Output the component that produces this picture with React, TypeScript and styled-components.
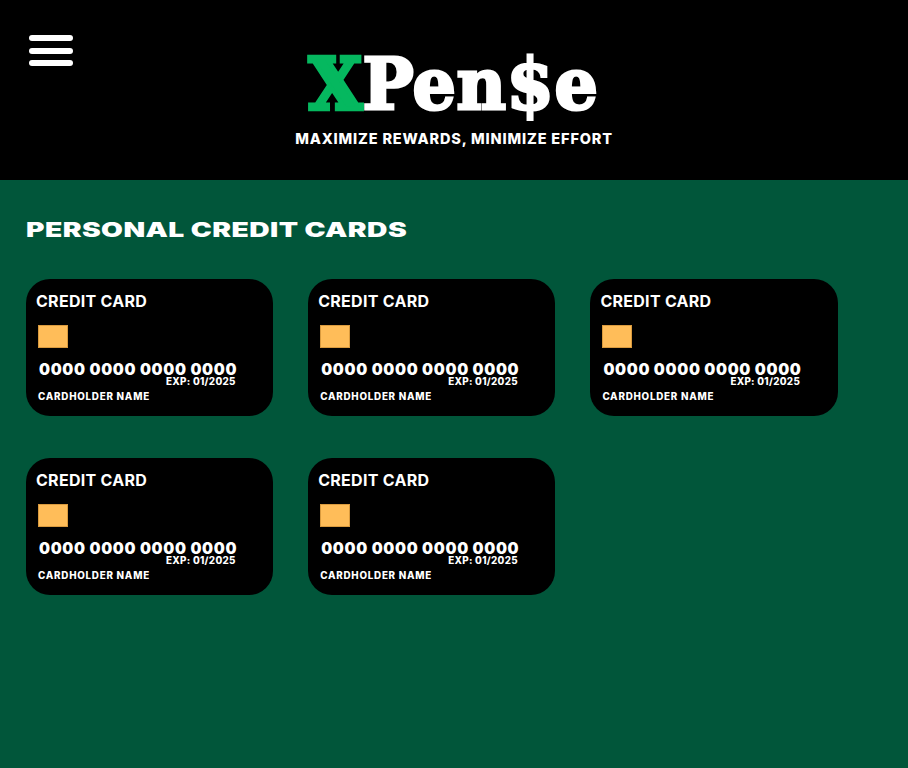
import React from "react";
import styled, { createGlobalStyle } from "styled-components";

const Global = createGlobalStyle`
  html, body { margin: 0; padding: 0; background: #01563a; }
  #root { width: 908px; height: 768px; overflow: hidden; }
`;
const Page = styled.div`
  width: 908px; height: 768px; background: #01563a; display: flex; flex-direction: column;
  font-family: "Inter", "Liberation Sans", sans-serif; color: #fff;
`;
const Header = styled.header`
  height: 180px; background: #000; display: flex; flex-direction: column; align-items: center; position: relative; padding-top: 41px; box-sizing: border-box;
`;
const Menu = styled.div`
  position: absolute; left: 28.5px; top: 35px; width: 44.5px; display: flex; flex-direction: column; gap: 6.3px;
`;
const MenuBar = styled.span`
  display: block; height: 6.3px; border-radius: 4px; background: #fff;
`;
const Logo = styled.div`
  font-family: "DejaVu Serif", serif; font-weight: 700; font-size: 71px; line-height: 86px; height: 86px;
  letter-spacing: 0.6px; display: flex; align-items: center; transform: scaleX(0.96);
`;
const LogoX = styled.span`
  color: #05b85f; -webkit-text-stroke: 4.5px #05b85f;
`;
const LogoRest = styled.span`
  color: #fff; -webkit-text-stroke: 3px #fff;
`;
const Tagline = styled.div`
  font-family: "Inter", sans-serif; font-weight: 800; font-size: 14.5px; line-height: 18px; letter-spacing: 0.84px; margin-top: 3px; white-space: nowrap;
`;
const Main = styled.main`
  flex: 1; padding: 38px 26px 0;
`;
const Heading = styled.h1`
  margin: 0 0 37px; font-family: "Inter", sans-serif; font-weight: 900; font-size: 20px; line-height: 24px; letter-spacing: 0.3px;
  white-space: nowrap; transform: scaleX(1.41); transform-origin: left center;
`;
const Grid = styled.div`
  display: grid; grid-template-columns: repeat(3, 247.2px); column-gap: 35px; row-gap: 42px;
`;
const Card = styled.article`
  height: 137px; background: #000; border-radius: 24px; padding: 12px 10px 0; box-sizing: border-box; display: flex; flex-direction: column;
`;
const CardTitle = styled.div`
  font-weight: 700; font-size: 16px; line-height: 21px; letter-spacing: 0.28px; white-space: nowrap;
`;
const Chip = styled.div`
  width: 30px; height: 23px; margin: 13px 0 0 2px; background: #ffbd59; box-sizing: border-box; border: 1px solid #d99a3e;
`;
const CardNumber = styled.div`
  font-weight: 900; font-size: 15.5px; line-height: 15px; letter-spacing: 0.66px; margin: 13.5px 0 0 3px; white-space: nowrap;
`;
const Expiry = styled.div`
  font-weight: 800; font-size: 9.8px; line-height: 9px; letter-spacing: 0.3px; margin: 0 0 0 130px; white-space: nowrap;
`;
const Holder = styled.div`
  font-weight: 800; font-size: 9.8px; line-height: 12px; letter-spacing: 0.76px; margin: 5.5px 0 0 2px; white-space: nowrap;
`;

export default function App() {
  return (
    <Page>
      <Global />
      <Header>
        <Menu><MenuBar /><MenuBar /><MenuBar /></Menu>
        <Logo><LogoX>X</LogoX><LogoRest>Pen$e</LogoRest></Logo>
        <Tagline>MAXIMIZE REWARDS, MINIMIZE EFFORT</Tagline>
      </Header>
      <Main>
        <Heading>PERSONAL CREDIT CARDS</Heading>
        <Grid>
          {[0, 1, 2, 3, 4].map((i) => (
            <Card key={i}>
              <CardTitle>CREDIT CARD</CardTitle>
              <Chip />
              <CardNumber>0000 0000 0000 0000</CardNumber>
              <Expiry>EXP: 01/2025</Expiry>
              <Holder>CARDHOLDER NAME</Holder>
            </Card>
          ))}
        </Grid>
      </Main>
    </Page>
  );
}
